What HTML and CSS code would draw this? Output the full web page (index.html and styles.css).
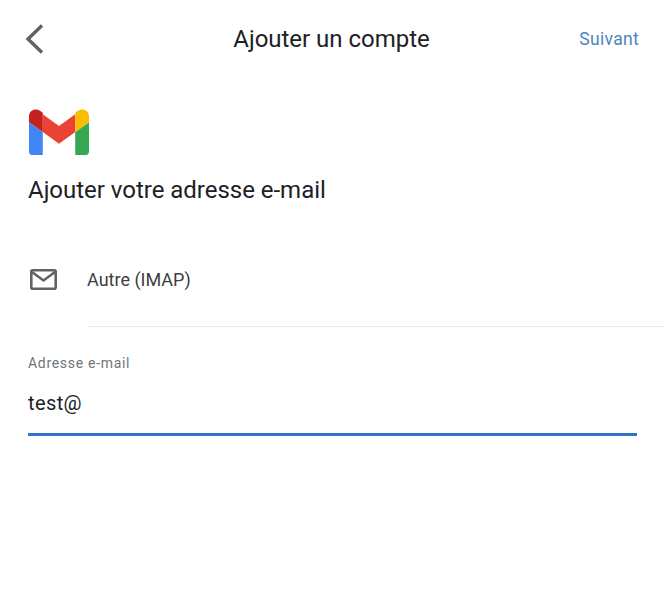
FILE: index.html
```html
<!DOCTYPE html>
<html lang="fr">
<head>
    <meta charset="UTF-8">
    <title>Ajouter un compte</title>
    <meta name="viewport" content="width=device-width, initial-scale=1">
    <link rel="stylesheet" href="styles.css">
</head>
<body>
    <header class="top-bar">
        <a class="back-link" href="#" aria-label="Retour">
            <svg width="20" height="32" viewBox="0 0 20 32">
                <path d="M18 2.500 L4 16 L18 29.500" fill="none" stroke="#5f6368" stroke-width="3.400"/>
            </svg>
        </a>
        <h1>Ajouter un compte</h1>
        <a class="next-link" href="#">Suivant</a>
    </header>
    <main>
        <div class="intro">
            <svg class="gmail-logo" width="60" height="47" viewBox="0 0 61 47">
                <path d="M0 13 L14 23 V46.500 H4 Q0 46.500 0 42.500 Z" fill="#4285f4"/>
                <path d="M61 13 L47 23 V46.500 H57 Q61 46.500 61 42.500 Z" fill="#34a853"/>
                <path d="M14 5 L30.500 17 L47 5 V23 L30.500 35 L14 23 Z" fill="#ea4335"/>
                <path d="M0 13 V7 C0 1 7 -2 12 2 L14 3.500 V23 Z" fill="#c5221f"/>
                <path d="M61 13 V7 C61 1 54 -2 49 2 L47 3.500 V23 Z" fill="#fbbc04"/>
            </svg>
            <h2>Ajouter votre adresse e-mail</h2>
        </div>
        <div class="provider-row">
            <svg class="mail-icon" width="27" height="21" viewBox="0 0 27 21">
                <rect x="1.300" y="1.300" width="24.400" height="18.400" rx="1.500" fill="none" stroke="#5f6368" stroke-width="2.600"/>
                <path d="M2 3 L13.500 11.500 L25 3" fill="none" stroke="#5f6368" stroke-width="2.600"/>
            </svg>
            <span>Autre (IMAP)</span>
        </div>
        <div class="email-field">
            <label for="email">Adresse e-mail</label>
            <input id="email" type="text" value="test@">
        </div>
    </main>
</body>
</html>
```

FILE: styles.css
```css
* {
    box-sizing: border-box;
}
body {
    margin: 0;
    background-color: #fff;
    color: #202124;
    font-family: "Roboto", "Liberation Sans", sans-serif;
}
a {
    text-decoration: none;
}

/* Top bar */
.top-bar {
    display: flex;
    align-items: center;
    justify-content: space-between;
    height: 77px;
    padding: 0 25px 0 24px;
}
.back-link {
    display: flex;
    width: 60px;
}
.top-bar h1 {
    margin: 0;
    font-size: 24px;
    font-weight: 400;
    letter-spacing: -0.020px;
}
.next-link {
    width: 60px;
    color: #4a86bd;
    font-size: 17.500px;
    letter-spacing: 0.3px;
    text-align: right;
    white-space: nowrap;
}

/* Logo and heading */
.intro {
    padding: 32px 29px 0 28px;
}
.gmail-logo {
    display: block;
    margin-left: 1px;
}
.intro h2 {
    margin: 19px 0 0;
    font-size: 24px;
    font-weight: 400;
    line-height: 30px;
    letter-spacing: -0.020px;
}

/* Provider row */
.provider-row {
    display: flex;
    align-items: center;
    height: 94px;
    margin-top: 28px;
    margin-left: 30px;
    font-size: 18px;
}
.mail-icon {
    margin-bottom: 2px;
}
.provider-row span {
    flex: 1;
    height: 94px;
    margin-left: 30px;
    padding-top: 35px;
    line-height: 24px;
    border-bottom: 1px solid #ececec;
    color: #3c4043;
}

/* Email field */
.email-field {
    padding: 27px 28px 0;
}
.email-field label {
    display: block;
    color: #70757a;
    font-size: 14px;
    line-height: 18px;
    letter-spacing: 0.7px;
}
.email-field input {
    display: block;
    width: 609px;
    height: 64px;
    padding: 0;
    margin-top: 0;
    border: 0;
    border-bottom: 3px solid #2f72c6;
    outline: none;
    background: none;
    color: #202124;
    font-family: inherit;
    font-size: 20px;
    letter-spacing: 0.4px;
}
```
